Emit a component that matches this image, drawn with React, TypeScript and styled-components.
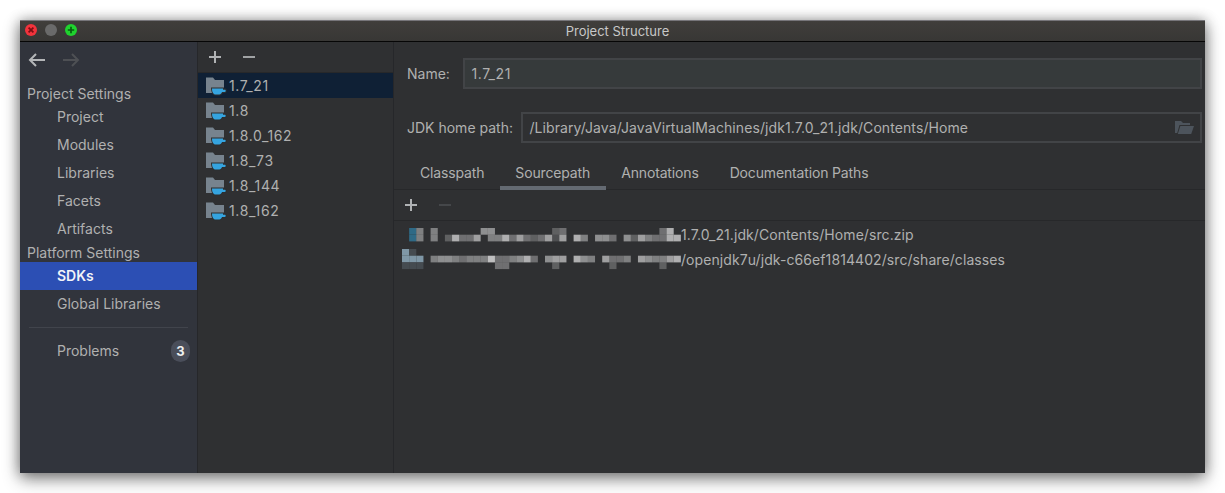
import React from 'react';
import styled, { createGlobalStyle } from 'styled-components';

const GlobalStyle = createGlobalStyle`
  html, body {
    margin: 0;
    background: #ffffff;
    font-family: Inter, "Liberation Sans", sans-serif;
  }
`;

const Page = styled.div`
  width: 1225px;
  height: 493px;
  padding: 20px;
  box-sizing: border-box;
  overflow: hidden;
`;

const Window = styled.div`
  display: flex;
  flex-direction: column;
  width: 1185px;
  height: 453px;
  background: #2f3032;
  box-shadow: 0 6px 16px rgba(0, 0, 0, 0.45), 0 0 12px rgba(0, 0, 0, 0.3);
  color: #b0b0b0;
  font-size: 14px;
`;

const TitleBar = styled.div`
  position: relative;
  flex: none;
  display: flex;
  align-items: center;
  justify-content: center;
  height: 22px;
  padding-left: 10px;
  box-sizing: border-box;
  background: linear-gradient(180deg, #403e3b 0%, #383735 100%);
  border-top: 1px solid #77767a;
  border-bottom: 1px solid #060606;
  color: #c8c8c8;
  font-size: 13px;
`;

const Lights = styled.div`
  position: absolute;
  left: 5px;
  top: 3px;
  display: flex;
  gap: 8px;
`;

const Body = styled.div`
  flex: 1;
  display: flex;
  min-height: 0;
`;

const Sidebar = styled.div`
  flex: none;
  width: 178px;
  box-sizing: border-box;
  background: #31343c;
  border-right: 1px solid #26272a;
  display: flex;
  flex-direction: column;
`;

const NavArrows = styled.div`
  height: 42px;
  padding: 11px 0 0 8px;
  box-sizing: border-box;
  display: flex;
  gap: 16px;
`;

const SectionTitle = styled.div`
  height: 19px;
  line-height: 19px;
  padding-left: 7px;
`;

const NavItem = styled.div<{ $active?: boolean }>`
  height: 28px;
  line-height: 28px;
  padding-left: 37px;
  background: ${p => (p.$active ? '#2c4fb4' : 'transparent')};
  color: ${p => (p.$active ? '#f2f4f8' : 'inherit')};
  font-weight: ${p => (p.$active ? 600 : 400)};
`;

const Separator = styled.div`
  height: 1px;
  margin: 9px;
  background: #41444c;
`;

const ProblemRow = styled(NavItem)`
  display: flex;
  align-items: center;
  justify-content: space-between;
  padding-right: 7px;
`;

const Badge = styled.span`
  width: 19px;
  height: 22px;
  border-radius: 10px;
  background: #4a4e5a;
  color: #f0f0f0;
  font-size: 13px;
  font-weight: 700;
  line-height: 22px;
  text-align: center;
`;

const SdkColumn = styled.div`
  flex: none;
  width: 196px;
  box-sizing: border-box;
  border-right: 1px solid #26272a;
  display: flex;
  flex-direction: column;
`;

const ListToolbar = styled.div`
  height: 31px;
  flex: none;
  padding: 8px 0 0 10px;
  box-sizing: border-box;
  display: flex;
  gap: 20px;
  border-bottom: 1px solid #27282a;
`;

const SdkRow = styled.div<{ $selected?: boolean }>`
  height: 25px;
  display: flex;
  align-items: center;
  gap: 2px;
  padding-left: 8px;
  background: ${p => (p.$selected ? '#0f2035' : 'transparent')};
  letter-spacing: 0.65px;
`;

const Details = styled.div`
  flex: 1;
  min-width: 0;
  display: flex;
  flex-direction: column;
`;

const Field = styled.div<{ $top: number; $gap: number }>`
  display: flex;
  align-items: center;
  gap: ${p => p.$gap}px;
  margin: ${p => p.$top}px 3px 0 13px;
`;

const Label = styled.span`
  flex: none;
`;

const Input = styled.div<{ $filled?: boolean }>`
  flex: 1;
  height: 31px;
  box-sizing: border-box;
  display: flex;
  align-items: center;
  justify-content: space-between;
  padding: 0 6px 0 6.5px;
  background: ${p => (p.$filled ? '#363a3b' : 'transparent')};
  border: 2px solid #424447;
  letter-spacing: ${p => (p.$filled ? '0.65px' : '0.09px')};
`;

const Tabs = styled.div`
  flex: none;
  display: flex;
  height: 32px;
  margin-top: 15px;
  padding-left: 10.5px;
  box-sizing: border-box;
  border-bottom: 1px solid #27282a;
`;

const Tab = styled.div<{ $active?: boolean }>`
  height: 32px;
  box-sizing: border-box;
  padding: 0 15.5px;
  line-height: 30px;
  letter-spacing: -0.15px;
  border-bottom: 4px solid ${p => (p.$active ? '#646a72' : 'transparent')};
`;

const PathToolbar = styled.div`
  flex: none;
  height: 31px;
  margin-bottom: 1px;
  padding: 8px 0 0 10px;
  box-sizing: border-box;
  display: flex;
  gap: 20px;
  border-bottom: 1px solid #27282a;
`;

const PathRow = styled.div`
  height: 25px;
  display: flex;
  align-items: center;
  padding-left: 8px;
  letter-spacing: 0.08px;
`;

const Mosaic = styled.svg`
  flex: none;
  display: block;
  filter: blur(0.5px);
`;

const CupFolder = () => (
  <svg width="21" height="20" viewBox="0 0 21 20">
    <path d="M0 1.5h7l2 2.5h9v13H0z" fill="#77838e" />
    <path d="M5 11.5h13v1h1.5c1.6 0 1.6 4.5-0.5 4.5h-2.3c-0.8 1.5-1.8 2.5-3.2 2.5H9.5C6.6 19.5 5 16 5 11.5z" fill="#2c2f31" />
    <path d="M6 12.5h11v1.2h2c1 0 1 2.3-0.3 2.3h-2.6c-0.7 1.5-1.6 2.5-2.8 2.5H9.5C7.4 18.5 6 16 6 12.5z" fill="#35a4e0" />
  </svg>
);

const OpenFolder = () => (
  <svg width="19" height="15" viewBox="0 0 19 15">
    <path d="M0 1h6l2 2h7v2H4.5L2.2 13H0z" fill="#4d545c" />
    <path d="M5.3 6H19l-2.8 8H2.8z" fill="#4d545c" />
  </svg>
);

const PlusIcon = ({ color = '#b0b2b4' }: { color?: string }) => (
  <svg width="14" height="14" viewBox="0 0 14 14">
    <path d="M7 1v12M1 7h12" stroke={color} strokeWidth="2" />
  </svg>
);

const MinusIcon = ({ color = '#a0a2a4' }: { color?: string }) => (
  <svg width="14" height="14" viewBox="0 0 14 14">
    <path d="M1 7h12" stroke={color} strokeWidth="2" />
  </svg>
);

const Arrow = ({ color, flip }: { color: string; flip?: boolean }) => (
  <svg width="18" height="14" viewBox="0 0 18 14" style={flip ? { transform: 'scaleX(-1)' } : undefined}>
    <path d="M17 7H2M8 1L2 7l6 6" fill="none" stroke={color} strokeWidth="2" />
  </svg>
);

const TrafficLights = () => (
  <Lights>
    <svg width="12" height="12" viewBox="0 0 12 12">
      <circle cx="6" cy="6" r="6" fill="#f2333c" />
      <path d="M3.6 3.6l4.8 4.8M8.4 3.6L3.6 8.4" stroke="#7c0d12" strokeWidth="1.7" />
    </svg>
    <svg width="12" height="12" viewBox="0 0 12 12">
      <circle cx="6" cy="6" r="6" fill="#6a6a6a" />
    </svg>
    <svg width="12" height="12" viewBox="0 0 12 12">
      <circle cx="6" cy="6" r="6" fill="#1fd32e" />
      <path d="M6 2.8v6.4M2.8 6h6.4" stroke="#075f10" strokeWidth="1.7" />
    </svg>
  </Lights>
);

// blurred-out part of the paths: one string per band of cells, digit = brightness
const CELL = 7.15;
const BAND = 6.7;
const firstPath = [
  '.b5.5......66........34.............48.',
  '.b5.5.38447.55847434727.85.664.63754488',
];
const secondPath = [
  'ce.....................................',
  'ccc.566545559445684.677.865.7445.765578',
  'eee..........44......3.......3......3..',
];

const cellColor = (c: string) => {
  if (c === 'b') return '#2f6a86';
  if (c === 'c') return '#7f97a6';
  if (c === 'e') return '#454b50';
  return '#cfcfcf';
};

const MosaicStrip = ({ rows, top }: { rows: string[]; top: number }) => (
  <Mosaic width={279} height={25} viewBox="0 0 279 25">
    {rows.map((row, y) =>
      row.split('').map((c, x) => {
        if (c === '.') return null;
        return (
          <rect
            key={`${y}-${x}`}
            x={x * CELL}
            y={top + y * BAND}
            width={CELL}
            height={BAND}
            fill={cellColor(c)}
            opacity={/\d/.test(c) ? Number(c) / 10 : 1}
          />
        );
      })
    )}
  </Mosaic>
);

const navTop = ['Project', 'Modules', 'Libraries', 'Facets', 'Artifacts'];
const sdks = ['1.7_21', '1.8', '1.8.0_162', '1.8_73', '1.8_144', '1.8_162'];
const tabs = ['Classpath', 'Sourcepath', 'Annotations', 'Documentation Paths'];

export default function App() {
  return (
    <Page>
      <GlobalStyle />
      <Window>
        <TitleBar>
          <TrafficLights />
          Project Structure
        </TitleBar>
        <Body>
          <Sidebar>
            <NavArrows>
              <Arrow color="#b4b6b8" />
              <Arrow color="#4e5054" flip />
            </NavArrows>
            <SectionTitle>Project Settings</SectionTitle>
            {navTop.map(item => (
              <NavItem key={item}>{item}</NavItem>
            ))}
            <SectionTitle>Platform Settings</SectionTitle>
            <NavItem $active>SDKs</NavItem>
            <NavItem>Global Libraries</NavItem>
            <Separator />
            <ProblemRow>
              Problems
              <Badge>3</Badge>
            </ProblemRow>
          </Sidebar>
          <SdkColumn>
            <ListToolbar>
              <PlusIcon />
              <MinusIcon />
            </ListToolbar>
            {sdks.map((sdk, i) => (
              <SdkRow key={sdk} $selected={i === 0}>
                <CupFolder />
                {sdk}
              </SdkRow>
            ))}
          </SdkColumn>
          <Details>
            <Field $top={16} $gap={13}>
              <Label>Name:</Label>
              <Input $filled>1.7_21</Input>
            </Field>
            <Field $top={23} $gap={8}>
              <Label>JDK home path:</Label>
              <Input>
                /Library/Java/JavaVirtualMachines/jdk1.7.0_21.jdk/Contents/Home
                <OpenFolder />
              </Input>
            </Field>
            <Tabs>
              {tabs.map(tab => (
                <Tab key={tab} $active={tab === 'Sourcepath'}>{tab}</Tab>
              ))}
            </Tabs>
            <PathToolbar>
              <PlusIcon />
              <MinusIcon color="#45474a" />
            </PathToolbar>
            <PathRow>
              <MosaicStrip rows={firstPath} top={6} />
              1.7.0_21.jdk/Contents/Home/src.zip
            </PathRow>
            <PathRow>
              <MosaicStrip rows={secondPath} top={2} />
              /openjdk7u/jdk-c66ef1814402/src/share/classes
            </PathRow>
          </Details>
        </Body>
      </Window>
    </Page>
  );
}
